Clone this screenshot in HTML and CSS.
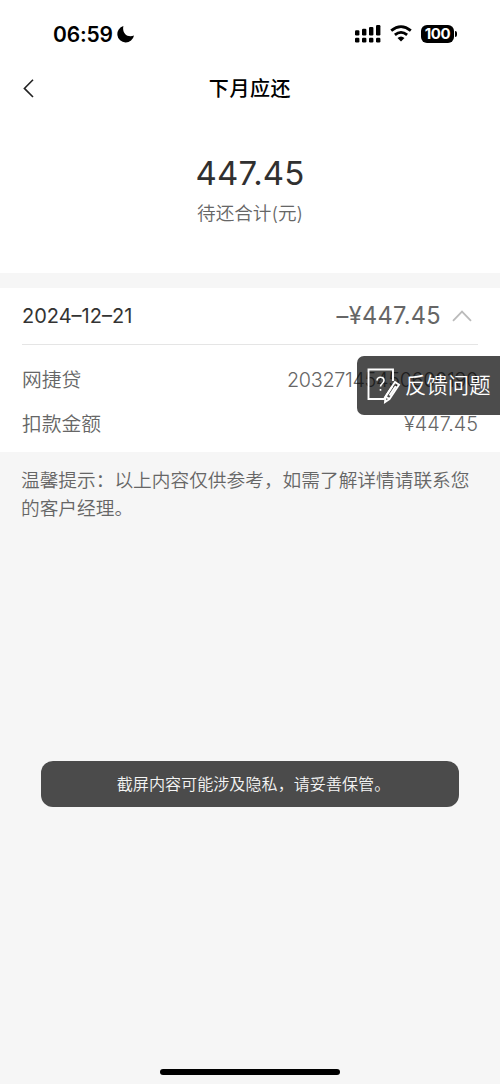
FILE: index.html
```
<!DOCTYPE html>
<html lang="zh-CN">
<head>
<meta charset="utf-8">
<title>下月应还</title>
<link rel="stylesheet" href="styles.css">
</head>
<body>
<div class="screen">
  <header class="top">
    <div class="status">
      <div class="status-left">
        <span class="clock">06:59</span>
        <svg class="moon" width="18" height="18" viewBox="0 0 18 18"><path d="M6.4 1C4.9 7.5 9.5 13 17 10.6A8.4 8.4 0 1 1 6.4 1Z"/></svg>
      </div>
      <div class="status-right">
        <svg width="26" height="18" viewBox="0 0 26 18"><rect x="0" y="5.2" width="4.4" height="5.3" rx="1.2"/><rect x="7" y="3.7" width="4.4" height="6.8" rx="1.2"/><rect x="14" y="1.9" width="4.4" height="8.6" rx="1.2"/><rect x="21" y="0" width="4.4" height="10.5" rx="1.2"/><rect x="0" y="12.8" width="4.4" height="4.6" rx="1.2"/><rect x="7" y="12.8" width="4.4" height="4.6" rx="1.2"/><rect x="14" y="12.8" width="4.4" height="4.6" rx="1.2"/><rect x="21" y="12.8" width="4.4" height="4.6" rx="1.2"/></svg>
        <svg class="wifi" width="22" height="17" viewBox="0 0 22 17"><path class="arc" d="M1.2 5.6Q11-2.4 20.8 5.6M4.9 9.9Q11 4.9 17.1 9.9"/><path d="M7.5 13.1Q11 10.1 14.5 13.1L11 16.6Z"/></svg>
        <div class="battery"><span class="level">100</span><i class="cap"></i></div>
      </div>
    </div>
    <nav class="nav">
      <svg class="back" width="12" height="20" viewBox="0 0 12 20"><path d="M11 .8L2.4 9.4L11 18"/></svg>
      <h1 class="title">下月应还</h1>
    </nav>
    <section class="summary">
      <div class="total">447.45</div>
      <div class="caption">待还合计(元)</div>
    </section>
  </header>
  <main class="bill">
    <div class="bill-head">
      <span class="date">2024–12–21</span>
      <span class="bill-amount">–¥447.45</span>
      <svg class="chevron" width="20" height="12" viewBox="0 0 20 12"><path d="M1 10.8L10 1.5L19 10.8"/></svg>
    </div>
    <div class="row"><span>网捷贷</span><span class="account">20327145450600190</span></div>
    <div class="row"><span>扣款金额</span><span class="charge">¥447.45</span></div>
    <div class="feedback">
      <svg width="34" height="36" viewBox="0 0 34 36"><path d="M26 13V1.5H1.5V31H17L25.5 18"/><path d="M28 14L32 16.7L22.5 31L18 34L18.5 28.5ZM18.5 28.5L22.5 31M28.8 18L22.5 27.5"/><path class="question" d="M10 12.5C10 8 17 8.2 17 12.5C17 15.5 13.5 15.5 13.5 18.5M13.5 21V22.8"/></svg>
      <span class="feedback-label">反馈问题</span>
    </div>
  </main>
  <p class="tip">温馨提示：以上内容仅供参考，如需了解详情请联系您的客户经理。</p>
  <div class="toast">截屏内容可能涉及隐私，请妥善保管。</div>
  <div class="home"></div>
</div>
</body>
</html>
```
FILE: styles.css
```
* { box-sizing: border-box; }
body { margin: 0; background: #f6f6f6; font-family: Inter, "Noto Sans CJK SC", sans-serif; color: #666; }
.screen { position: relative; width: 500px; height: 1084px; overflow: hidden; background: #f6f6f6; }
.top { height: 273px; background: #fff; }
.status { height: 64px; padding: 20px 43px 0 53px; display: flex; justify-content: space-between; }
.status-left { display: flex; align-items: center; gap: 4px; height: 28px; }
.clock { font-size: 21px; font-weight: 600; color: #000; letter-spacing: -.2px; }
.status-right { display: flex; align-items: center; gap: 9px; height: 27px; }
.arc { fill: none; stroke: #000; stroke-width: 2.8; }
.battery { display: flex; align-items: center; gap: 1px; }
.level { width: 33px; height: 18px; border-radius: 6px; background: #000; color: #fff; font-size: 15px; font-weight: 700; line-height: 18px; text-align: center; letter-spacing: -.4px; }
.cap { width: 2px; height: 6px; border-radius: 0 2px 2px 0; background: #000; }
.nav { height: 49px; padding: 0 22px; display: grid; grid-template-columns: 12px 1fr 12px; align-items: center; }
.back path { fill: none; stroke: #222; stroke-width: 1.6; }
.title { margin: 0; padding-top: 1px; text-align: center; font-size: 20px; font-weight: 500; line-height: 30px; letter-spacing: .6px; color: #000; }
.summary { padding-top: 38px; text-align: center; }
.total { font-size: 33px; line-height: 44px; font-weight: 375; letter-spacing: .15px; color: #303030; }
.caption { margin-top: 4px; font-size: 18.6px; line-height: 28px; font-weight: 350; }
.bill { position: relative; margin-top: 15px; height: 164px; padding: 0 22px; background: #fff; }
.bill-head { height: 57px; display: flex; align-items: center; border-bottom: 1px solid #e5e5e5; }
.date { font-size: 20px; font-weight: 375; color: #333; margin-right: auto; }
.bill-amount { font-size: 23.6px; font-weight: 375; letter-spacing: .3px; padding-bottom: 2px; }
.chevron { margin: 0 6px 1px 11px; }
.chevron path { fill: none; stroke: #bbb; stroke-width: 1.8; }
.row { display: flex; justify-content: space-between; align-items: center; height: 44px; font-size: 19.8px; font-weight: 350; line-height: 30px; }
.bill-head + .row { margin-top: 13px; }
.account { font-weight: 350; letter-spacing: -.3px; }
.charge { font-weight: 350; }
.feedback { position: absolute; right: 0; top: 68px; width: 143px; height: 59px; padding-left: 10px; border-radius: 7px 0 0 7px; background: rgba(0, 0, 0, .7); color: #fff; display: flex; align-items: center; gap: 4px; font-size: 21.4px; font-weight: 350; white-space: nowrap; }
.feedback svg { fill: none; stroke: #fff; stroke-width: 1.9; }
.feedback .question { stroke-width: 1.6; }
.feedback-label { padding-bottom: 4px; }
.tip { margin: 15px 22px 0 21px; font-size: 18.7px; font-weight: 350; line-height: 28px; }
.toast { position: absolute; left: 41px; top: 761px; width: 418px; height: 46px; padding-left: 7px; border-radius: 12px; background: #4b4b4b; color: #f4f4f4; text-align: center; font-size: 16.1px; font-weight: 350; line-height: 46px; }
.home { position: absolute; left: 160px; top: 1069px; width: 180px; height: 6px; border-radius: 3px; background: #000; }
```
